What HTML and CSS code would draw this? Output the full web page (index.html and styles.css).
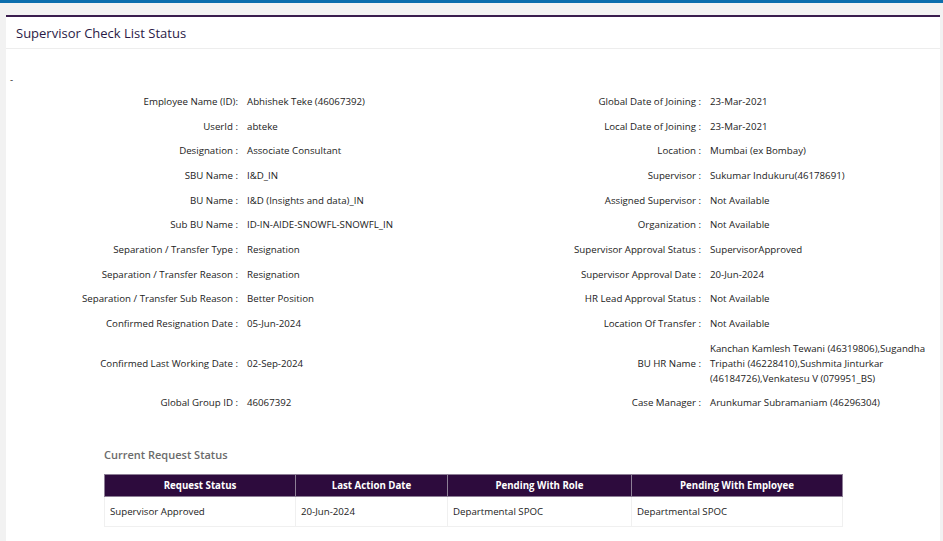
FILE: index.html
```html
<!DOCTYPE html>
<html>
<head>
<meta charset="utf-8">
<link rel="stylesheet" href="styles.css">
</head>
<body>
<div class="topbar"></div>
<div class="page">
  <div class="panel">
    <div class="panel-head">Supervisor Check List Status</div>
    <div class="panel-body">
      <div class="dash">-</div>
      <div class="details">
        <div class="lbl">Employee Name (ID):</div><div class="val">Abhishek Teke (46067392)</div>
        <div class="lbl">Global Date of Joining :</div><div class="val">23-Mar-2021</div>

        <div class="lbl">UserId :</div><div class="val">abteke</div>
        <div class="lbl">Local Date of Joining :</div><div class="val">23-Mar-2021</div>

        <div class="lbl">Designation :</div><div class="val">Associate Consultant</div>
        <div class="lbl">Location :</div><div class="val">Mumbai (ex Bombay)</div>

        <div class="lbl">SBU Name :</div><div class="val">I&amp;D_IN</div>
        <div class="lbl">Supervisor :</div><div class="val">Sukumar Indukuru(46178691)</div>

        <div class="lbl">BU Name :</div><div class="val">I&amp;D (Insights and data)_IN</div>
        <div class="lbl">Assigned Supervisor :</div><div class="val">Not Available</div>

        <div class="lbl">Sub BU Name :</div><div class="val">ID-IN-AIDE-SNOWFL-SNOWFL_IN</div>
        <div class="lbl">Organization :</div><div class="val">Not Available</div>

        <div class="lbl">Separation / Transfer Type :</div><div class="val">Resignation</div>
        <div class="lbl">Supervisor Approval Status :</div><div class="val">SupervisorApproved</div>

        <div class="lbl">Separation / Transfer Reason :</div><div class="val">Resignation</div>
        <div class="lbl">Supervisor Approval Date :</div><div class="val">20-Jun-2024</div>

        <div class="lbl">Separation / Transfer Sub Reason :</div><div class="val">Better Position</div>
        <div class="lbl">HR Lead Approval Status :</div><div class="val">Not Available</div>

        <div class="lbl">Confirmed Resignation Date :</div><div class="val">05-Jun-2024</div>
        <div class="lbl">Location Of Transfer :</div><div class="val">Not Available</div>

        <div class="lbl">Confirmed Last Working Date :</div><div class="val">02-Sep-2024</div>
        <div class="lbl">BU HR Name :</div><div class="val">Kanchan Kamlesh Tewani (46319806),Sugandha Tripathi (46228410),Sushmita Jinturkar (46184726),Venkatesu V (079951_BS)</div>

        <div class="lbl">Global Group ID :</div><div class="val">46067392</div>
        <div class="lbl">Case Manager :</div><div class="val">Arunkumar Subramaniam (46296304)</div>
      </div>

      <div class="status">
        <div class="status-title">Current Request Status</div>
        <table class="status-table">
          <thead>
            <tr>
              <th class="c1">Request Status</th>
              <th class="c2">Last Action Date</th>
              <th class="c3">Pending With Role</th>
              <th class="c4">Pending With Employee</th>
            </tr>
          </thead>
          <tbody>
            <tr>
              <td>Supervisor Approved</td>
              <td>20-Jun-2024</td>
              <td>Departmental SPOC</td>
              <td>Departmental SPOC</td>
            </tr>
          </tbody>
        </table>
      </div>
    </div>
  </div>
</div>
</body>
</html>
```

FILE: styles.css
```css
* { box-sizing: border-box; }
html, body {
  margin: 0;
  padding: 0;
  height: 100%;
  overflow: hidden;
}
body {
  background: #f2f2f2;
  font-family: "Open Sans", "Noto Sans", sans-serif;
  font-size: 9.7px;
  color: #222;
}
.topbar {
  height: 3px;
  background: #0b6ead;
}
.page {
  padding: 12px 3px 0 6px;
  height: calc(100% - 3px);
}
.panel {
  background: #fff;
  border-top: 2px solid #3a1d4e;
  height: 100%;
}
.panel-head {
  height: 32px;
  padding: 0 10px;
  display: flex;
  align-items: center;
  font-size: 13px;
  color: #2a1a46;
  border-bottom: 1px solid #ededed;
}
.panel-body {
  padding-top: 24px;
}
.dash {
  padding-left: 4px;
  line-height: 14px;
  height: 14px;
}
.details {
  display: grid;
  grid-template-columns: 241px 224px 239px 1fr;
  align-items: center;
  margin-top: 2px;
}
.lbl, .val {
  line-height: 15px;
  padding: 4.85px 0;
}
.lbl {
  text-align: right;
  padding-right: 9px;
}
.val {
  padding-right: 10px;
}
.status {
  margin: 33px 0 0 98px;
  width: 738px;
}
.status-title {
  font-size: 11px;
  font-weight: 600;
  color: #6b6b6b;
  line-height: 14px;
}
.status-table {
  margin-top: 12px;
  width: 738px;
  border-collapse: collapse;
  table-layout: fixed;
}
.status-table th {
  background: #2d0b3d;
  color: #fff;
  font-weight: 700;
  text-align: center;
  height: 22px;
  padding: 0 5px;
  border: 1px solid #8d7f96;
}
.status-table td {
  height: 30px;
  padding: 0 5px;
  border: 1px solid #f0f0f0;
  color: #222;
}
.c1 { width: 191px; }
.c2 { width: 152px; }
.c3 { width: 184px; }
.c4 { width: 211px; }
```
